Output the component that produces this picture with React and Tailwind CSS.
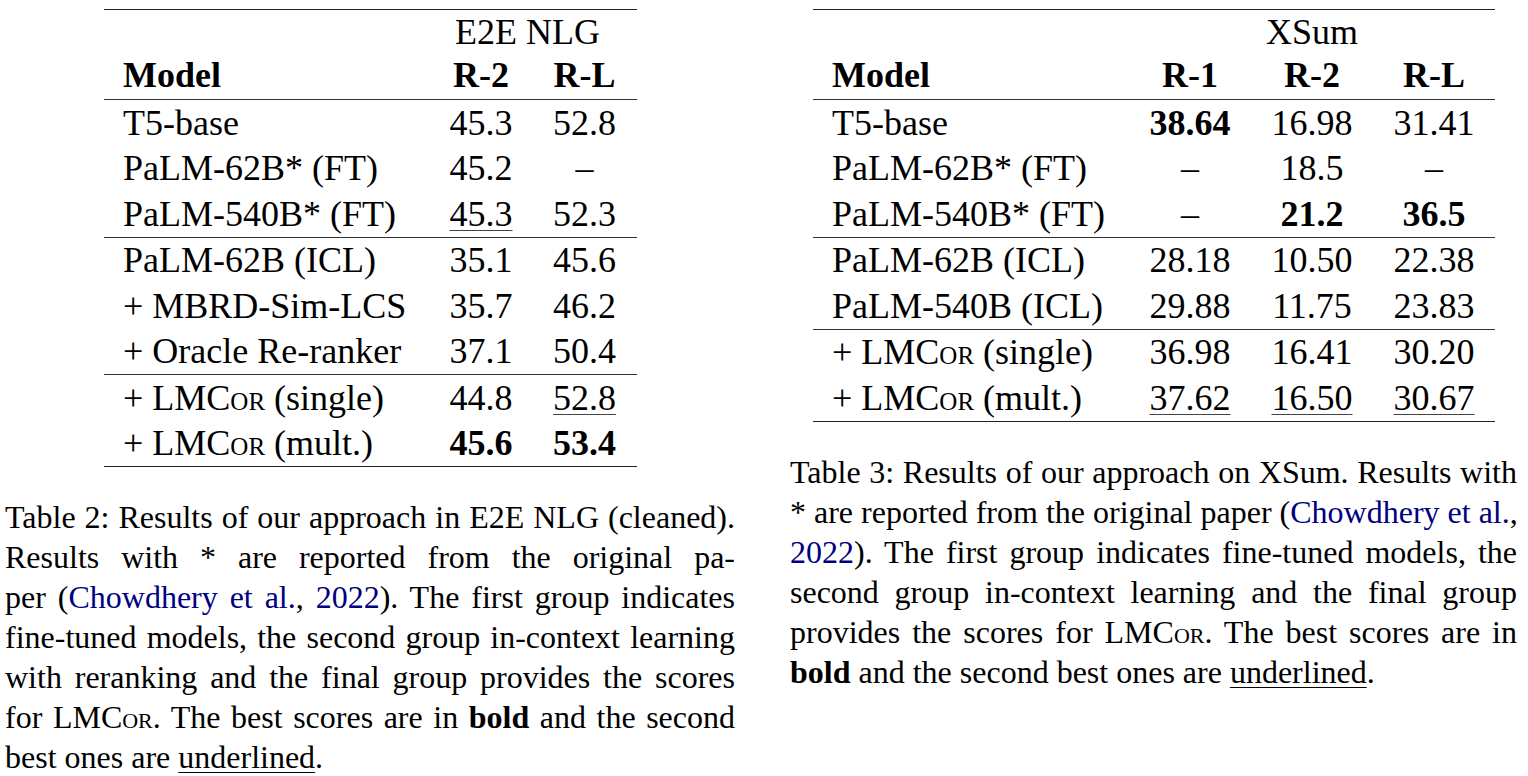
import React from "react";

const leftGroups = [
  [
    { model: "T5-base", cells: [{ v: "45.3" }, { v: "52.8" }] },
    { model: "PaLM-62B* (FT)", cells: [{ v: "45.2" }, { v: "–" }] },
    { model: "PaLM-540B* (FT)", cells: [{ v: "45.3", u: true }, { v: "52.3" }] },
  ],
  [
    { model: "PaLM-62B (ICL)", cells: [{ v: "35.1" }, { v: "45.6" }] },
    { model: "+ MBRD-Sim-LCS", cells: [{ v: "35.7" }, { v: "46.2" }] },
    { model: "+ Oracle Re-ranker", cells: [{ v: "37.1" }, { v: "50.4" }] },
  ],
  [
    { model: "lm", tag: "(single)", cells: [{ v: "44.8" }, { v: "52.8", u: true }] },
    { model: "lm", tag: "(mult.)", cells: [{ v: "45.6", b: true }, { v: "53.4", b: true }] },
  ],
];

const rightGroups = [
  [
    { model: "T5-base", cells: [{ v: "38.64", b: true }, { v: "16.98" }, { v: "31.41" }] },
    { model: "PaLM-62B* (FT)", cells: [{ v: "–" }, { v: "18.5" }, { v: "–" }] },
    { model: "PaLM-540B* (FT)", cells: [{ v: "–" }, { v: "21.2", b: true }, { v: "36.5", b: true }] },
  ],
  [
    { model: "PaLM-62B (ICL)", cells: [{ v: "28.18" }, { v: "10.50" }, { v: "22.38" }] },
    { model: "PaLM-540B (ICL)", cells: [{ v: "29.88" }, { v: "11.75" }, { v: "23.83" }] },
  ],
  [
    { model: "lm", tag: "(single)", cells: [{ v: "36.98" }, { v: "16.41" }, { v: "30.20" }] },
    { model: "lm", tag: "(mult.)", cells: [{ v: "37.62", u: true }, { v: "16.50", u: true }, { v: "30.67", u: true }] },
  ],
];

const LMCor = () => (
  <>
    LM<span className="[font-variant:small-caps]">Cor</span>
  </>
);

const Cite = () => (
  <>
    <span className="text-[#000080]">Chowdhery et al.</span>,{" "}
    <span className="text-[#000080]">2022</span>
  </>
);

const Cell = ({ cell }) => (
  <span
    className={
      (cell.b ? "font-bold " : "") +
      (cell.u ? "underline decoration-1 decoration-[#444] underline-offset-[4px]" : "")
    }
  >
    {cell.v}
  </span>
);

const Table = ({ cols, width, title, titlePad, heads, groups }) => (
  <div className={`${width} border-t-[1.5px] border-b-[1.5px] border-[#222]`}>
    <div className={`grid ${cols} h-[44px] items-center`}>
      <span />
      <span className={`col-span-full col-start-2 text-center ${titlePad}`}>{title}</span>
    </div>
    <div className={`grid ${cols} h-[45px] pb-[3px] items-center font-bold`}>
      <span className="pl-[19px]">Model</span>
      {heads.map((h) => (
        <span key={h} className="text-center">
          {h}
        </span>
      ))}
    </div>
    {groups.map((rows, gi) => (
      <div key={gi} className="border-t border-[#333]">
        {rows.map((row, ri) => (
          <div key={ri} className={`grid ${cols} h-[45.5px] items-center`}>
            <span className="pl-[19px] whitespace-nowrap">
              {row.model === "lm" ? (
                <>
                  + <LMCor /> {row.tag}
                </>
              ) : (
                row.model
              )}
            </span>
            {row.cells.map((c, ci) => (
              <span key={ci} className="text-center">
                <Cell cell={c} />
              </span>
            ))}
          </div>
        ))}
      </div>
    ))}
  </div>
);

const Line = ({ children, last }) => (
  <div
    className={
      "whitespace-nowrap " +
      (last ? "text-left" : "text-justify [text-align-last:justify]")
    }
  >
    {children}
  </div>
);

const App = () => {
  return (
    <div className="w-[1528px] h-[776px] bg-white text-black flex [font-family:'Liberation_Serif','Times_New_Roman',serif] overflow-hidden">
      <div className="w-[780px] flex flex-col pt-[9px]">
        <div className="ml-[104px] text-[36px] leading-none">
          <Table
            width="w-[533px]"
            cols="grid-cols-[326px_102px_105px]"
            title="E2E NLG"
            titlePad="pr-[12px]"
            heads={["R-2", "R-L"]}
            groups={leftGroups}
          />
        </div>
        <div className="ml-[5px] mt-[30px] w-[730px] text-[32px] leading-[40px]">
          <Line>Table 2: Results of our approach in E2E NLG (cleaned).</Line>
          <Line>Results with * are reported from the original pa-</Line>
          <Line>
            per (<Cite />). The first group indicates
          </Line>
          <Line>fine-tuned models, the second group in-context learning</Line>
          <Line>with reranking and the final group provides the scores</Line>
          <Line>
            for <LMCor />. The best scores are in <b>bold</b> and the second
          </Line>
          <Line last>
            best ones are{" "}
            <span className="underline decoration-1 underline-offset-[4px]">underlined</span>.
          </Line>
        </div>
      </div>

      <div className="flex-1 flex flex-col pt-[9px] pl-[10px]">
        <div className="ml-[23px] text-[36px] leading-none">
          <Table
            width="w-[682px]"
            cols="grid-cols-[316px_122px_122px_122px]"
            title="XSum"
            titlePad=""
            heads={["R-1", "R-2", "R-L"]}
            groups={rightGroups}
          />
        </div>
        <div className="mt-[30px] w-[727px] text-[32px] leading-[40px]">
          <Line>Table 3: Results of our approach on XSum. Results with</Line>
          <Line>
            * are reported from the original paper (<span className="text-[#000080]">Chowdhery et al.</span>,
          </Line>
          <Line>
            <span className="text-[#000080]">2022</span>). The first group indicates fine-tuned models, the
          </Line>
          <Line>second group in-context learning and the final group</Line>
          <Line>
            provides the scores for <LMCor />. The best scores are in
          </Line>
          <Line last>
            <b>bold</b> and the second best ones are{" "}
            <span className="underline decoration-1 underline-offset-[4px]">underlined</span>.
          </Line>
        </div>
      </div>
    </div>
  );
};

export default App;
